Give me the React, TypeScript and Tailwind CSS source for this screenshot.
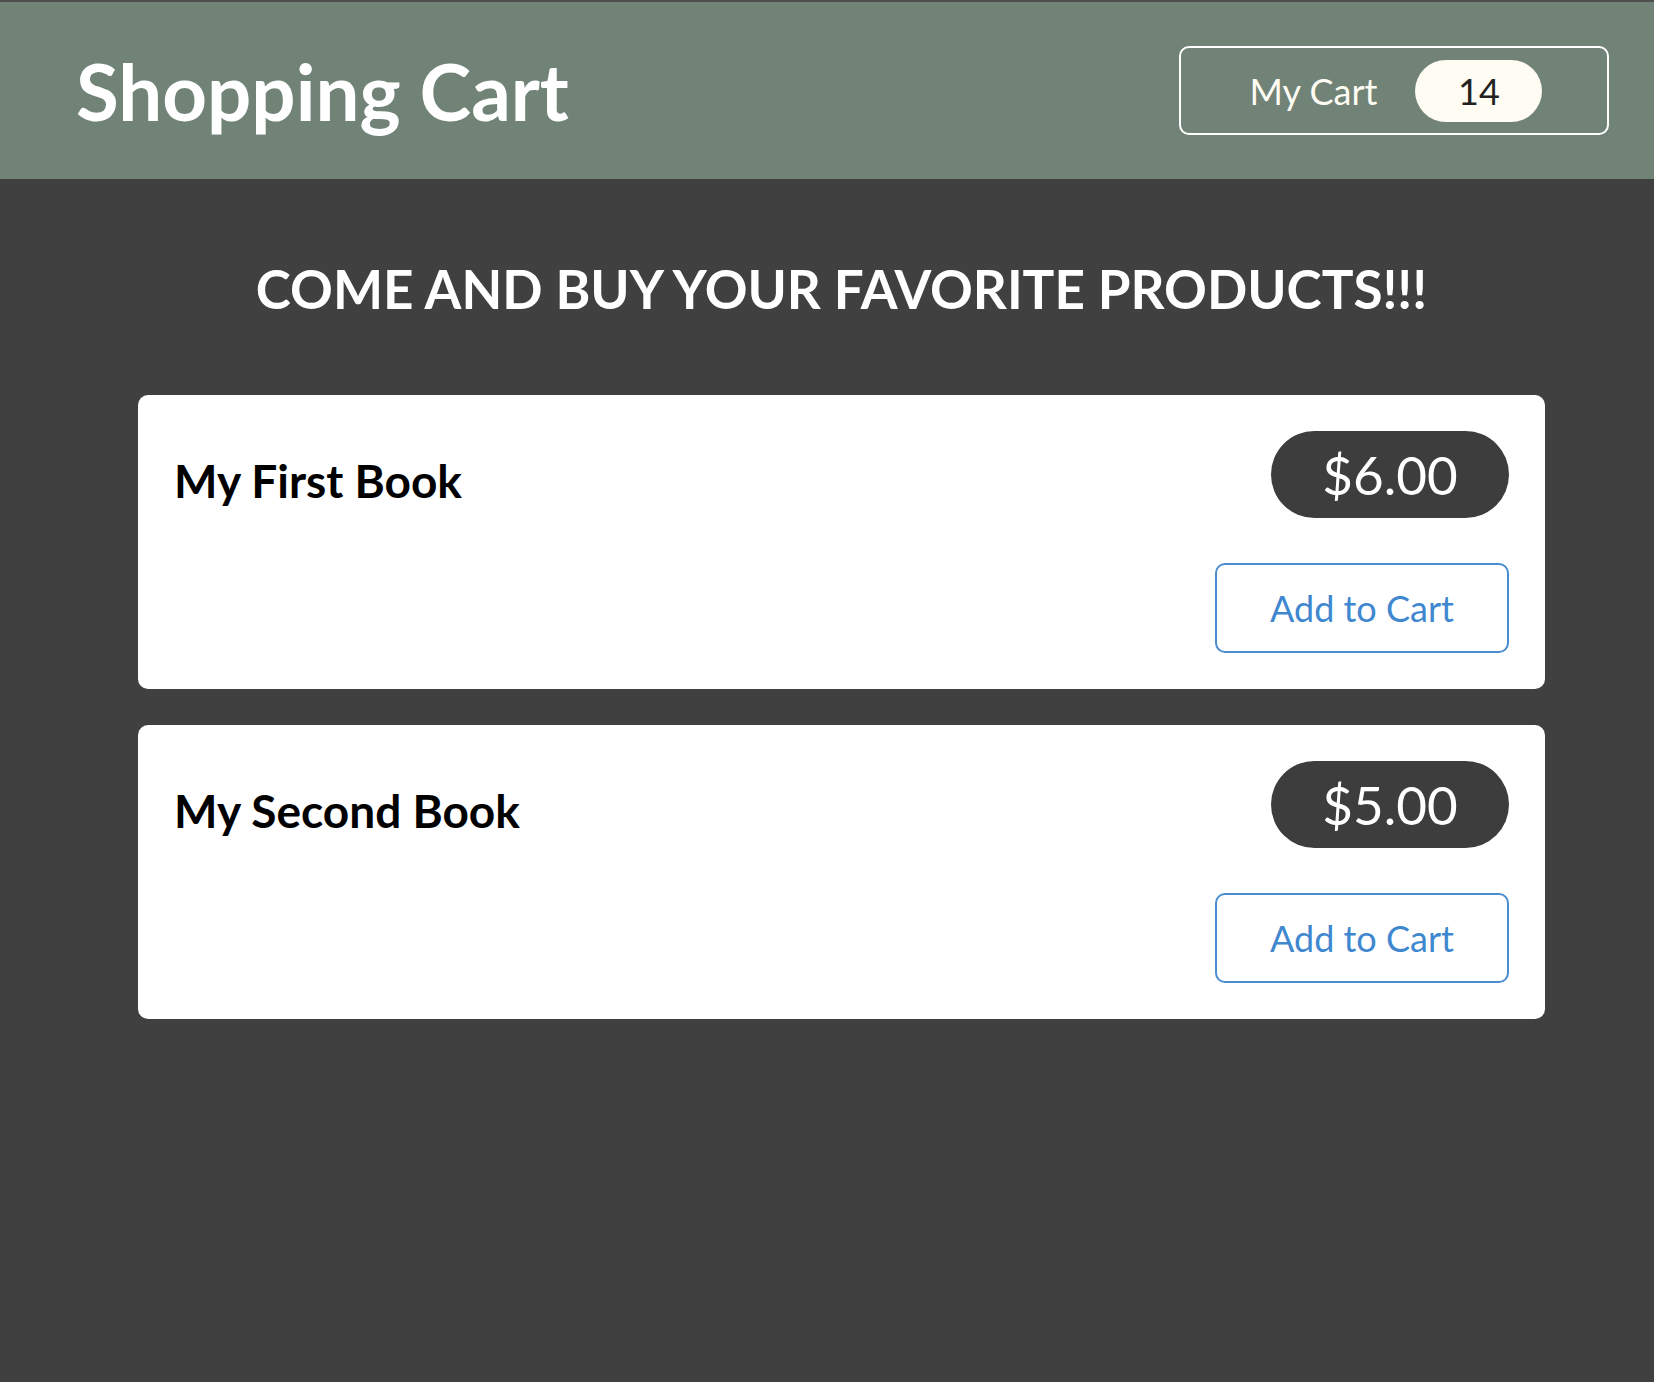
import { useState } from 'react'

type Product = {
  id: number
  title: string
  price: number
}

const PRODUCTS: Product[] = [
  { id: 1, title: 'My First Book', price: 6 },
  { id: 2, title: 'My Second Book', price: 5 },
]

function ProductCard({ product, onAdd }: { product: Product; onAdd: () => void }) {
  return (
    <div className="flex justify-between rounded-[10px] bg-white p-[36px]">
      <h3 className="mt-[27px] text-[46px] font-bold leading-none text-black">{product.title}</h3>
      <div className="flex flex-col items-end gap-[45px]">
        <div className="flex h-[87px] w-[238px] items-center justify-center rounded-full bg-[#3d3d3d] text-[53px] leading-none text-white">
          ${product.price.toFixed(2)}
        </div>
        <button
          onClick={onAdd}
          className="flex h-[90px] w-[294px] items-center justify-center rounded-[10px] border-2 border-[#4a8dd0] bg-white text-[36px] leading-none text-[#3f88cf]"
        >
          Add to Cart
        </button>
      </div>
    </div>
  )
}

export default function App() {
  const [count, setCount] = useState(14)

  return (
    <div className="min-h-screen bg-[#404040] font-['Lato','Liberation_Sans',sans-serif]">
      {/* Header */}
      <header className="flex h-[179px] items-center justify-between border-t-2 border-[#4e4e4e] bg-[#718377] pl-[76px] pr-[45px]">
        <h1 className="text-[78px] font-bold leading-none text-white">Shopping Cart</h1>
        <div className="flex h-[89px] w-[430px] items-center justify-center gap-[38px] rounded-[10px] border-2 border-white pl-[4px]">
          <span className="text-[36px] leading-none text-[#fffcf3]">My Cart</span>
          <span className="flex h-[62px] w-[127px] items-center justify-center rounded-full bg-[#fffcf3] text-[36px] leading-none text-[#222]">
            {count}
          </span>
        </div>
      </header>

      {/* Products */}
      <main className="pl-[138px] pr-[109px]">
        <h2 className="mt-[83px] mb-[80px] text-center text-[53px] font-bold leading-none text-white">
          COME AND BUY YOUR FAVORITE PRODUCTS!!!
        </h2>
        <div className="flex flex-col gap-[36px]">
          {PRODUCTS.map(p => (
            <ProductCard key={p.id} product={p} onAdd={() => setCount(c => c + 1)} />
          ))}
        </div>
      </main>
    </div>
  )
}
